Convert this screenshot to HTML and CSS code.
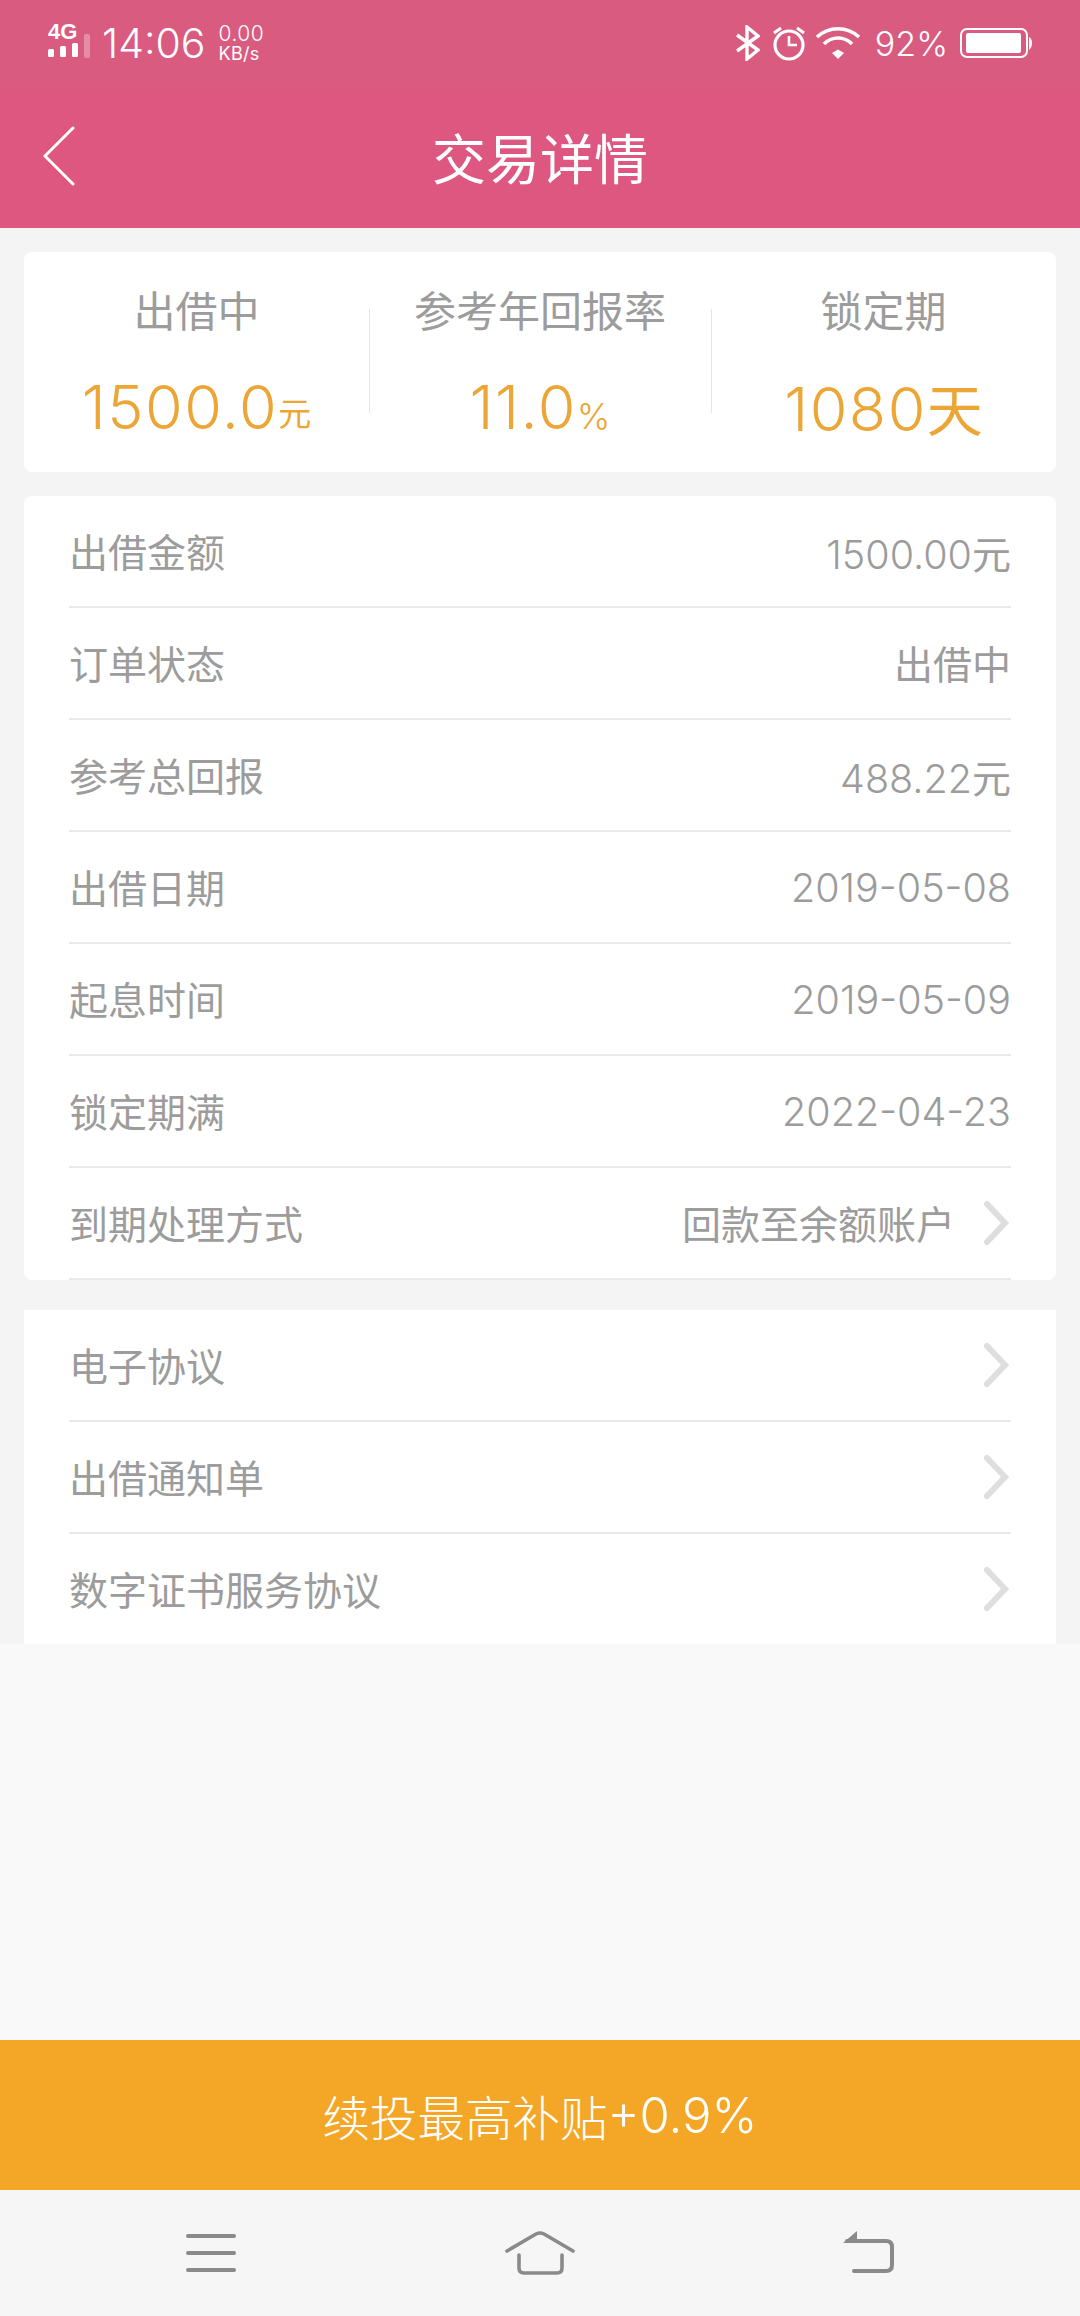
FILE: index.html
```html
<!DOCTYPE html>
<html lang="zh-CN">
<head>
    <meta charset="UTF-8">
    <title>交易详情</title>
    <link rel="stylesheet" href="styles.css">
</head>
<body>
<div class="page">
    <div class="topBar">
        <div class="statusBar">
            <div class="statusLeft">
                <div class="netType">
                    <div class="netColumn">
                        <span class="netLabel">4G</span>
                        <svg class="netBars" width="30" height="15" viewBox="0 0 30 15" fill="#fff">
                            <rect x="0" y="6" width="6" height="8" rx="1.5"/>
                            <rect x="12" y="3" width="6" height="11" rx="1.5"/>
                            <rect x="24" y="0" width="6" height="14" rx="1.5"/>
                        </svg>
                    </div>
                    <div class="netEmptyBar"></div>
                </div>
                <span class="clock">14:06</span>
                <span class="netSpeed"><span>0.00</span><span class="netUnit">KB/s</span></span>
            </div>
            <div class="statusRight">
                <svg width="24" height="36" viewBox="0 0 24 36" fill="none" stroke="#fff" stroke-width="3.4">
                    <path d="M1 10 L22 25 L11 34 V2 L22 11 L1 26"/>
                </svg>
                <svg width="34" height="36" viewBox="0 0 34 36" fill="none" stroke="#fff">
                    <circle cx="17" cy="20" r="14" stroke-width="3.2"/>
                    <path d="M17 11 V20 H25" stroke-width="2.6"/>
                    <path d="M2 8 L9 3 M32 8 L25 3" stroke-width="3"/>
                </svg>
                <svg class="wifi" width="46" height="34" viewBox="0 0 46 34" fill="none" stroke="#fff" stroke-width="3.6">
                    <path d="M2 11 C14 0 32 0 44 11"/>
                    <path d="M9 18 C17 10 29 10 37 18"/>
                    <path d="M17 27 L23 23.5 L29 27 L23 33 Z" fill="#fff" stroke="none"/>
                </svg>
                <span class="battPct">92%</span>
                <svg width="72" height="30" viewBox="0 0 72 30">
                    <rect x="1" y="1" width="66" height="28" rx="6" fill="none" stroke="#fff" stroke-width="2"/>
                    <rect x="6" y="5" width="55" height="20" rx="2" fill="#fff"/>
                    <path d="M69 9 C71 10 72 12 72 15 C72 18 71 20 69 22 Z" fill="#fff"/>
                </svg>
            </div>
        </div>
        <div class="navBar">
            <svg class="backIcon" width="32" height="60" viewBox="0 0 32 60" fill="none" stroke="#fff" stroke-width="3" stroke-linecap="round" stroke-linejoin="round">
                <path d="M30 2 L2 30 L30 58"/>
            </svg>
            <h1>交易详情</h1>
        </div>
    </div>

    <div class="content">
        <div class="card summary">
            <div class="summaryCol">
                <div class="summaryLabel">出借中</div>
                <div class="summaryValue">1500.0<small>元</small></div>
            </div>
            <div class="summaryCol">
                <div class="summaryLabel">参考年回报率</div>
                <div class="summaryValue">11.0<small class="pct">%</small></div>
            </div>
            <div class="summaryCol">
                <div class="summaryLabel">锁定期</div>
                <div class="summaryValue">1080<span class="bigUnit">天</span></div>
            </div>
        </div>

        <div class="card rows">
            <div class="row"><span class="rowLabel">出借金额</span><span class="rowValue">1500.00<span class="rowUnit">元</span></span></div>
            <div class="row"><span class="rowLabel">订单状态</span><span class="rowLabel">出借中</span></div>
            <div class="row"><span class="rowLabel">参考总回报</span><span class="rowValue">488.22<span class="rowUnit">元</span></span></div>
            <div class="row"><span class="rowLabel">出借日期</span><span class="rowValue">2019-05-08</span></div>
            <div class="row"><span class="rowLabel">起息时间</span><span class="rowValue">2019-05-09</span></div>
            <div class="row"><span class="rowLabel">锁定期满</span><span class="rowValue">2022-04-23</span></div>
            <div class="row">
                <span class="rowLabel">到期处理方式</span>
                <span class="rowAction">
                    <span class="rowLabel">回款至余额账户</span>
                    <svg class="chevron" width="28" height="46" viewBox="0 0 28 46" fill="none" stroke="#dedede" stroke-width="6" stroke-linecap="round"><path d="M4 4 L22 23 L4 42"/></svg>
                </span>
            </div>
        </div>

        <div class="card rows links">
            <div class="row"><span class="rowLabel">电子协议</span><svg width="28" height="46" viewBox="0 0 28 46" fill="none" stroke="#dedede" stroke-width="6" stroke-linecap="round"><path d="M4 4 L22 23 L4 42"/></svg></div>
            <div class="row"><span class="rowLabel">出借通知单</span><svg width="28" height="46" viewBox="0 0 28 46" fill="none" stroke="#dedede" stroke-width="6" stroke-linecap="round"><path d="M4 4 L22 23 L4 42"/></svg></div>
            <div class="row"><span class="rowLabel">数字证书服务协议</span><svg width="28" height="46" viewBox="0 0 28 46" fill="none" stroke="#dedede" stroke-width="6" stroke-linecap="round"><path d="M4 4 L22 23 L4 42"/></svg></div>
        </div>
    </div>

    <div class="actionButton">续投最高补贴<span class="actionRate">+0.9%</span></div>

    <div class="systemNav">
        <svg width="50" height="40" viewBox="0 0 50 40" fill="none" stroke="#8a8a8a" stroke-width="4" stroke-linecap="round">
            <path d="M2 3 H48 M2 20 H48 M2 37 H48"/>
        </svg>
        <svg width="70" height="44" viewBox="0 0 70 44" fill="none" stroke="#8a8a8a" stroke-width="3.6" stroke-linecap="round" stroke-linejoin="round">
            <path d="M2 20 L31 3 Q35 1 39 3 L68 20"/>
            <path d="M14 24 V37 Q14 42 19 42 H52 Q57 42 57 37 V24"/>
        </svg>
        <svg width="52" height="44" viewBox="0 0 52 44" fill="none" stroke="#8a8a8a" stroke-width="4" stroke-linecap="round">
            <path d="M4 10 H43 Q49 10 49 16 V34 Q49 40 43 40 H11"/>
            <path d="M0 12 L14 0 V12 Z" fill="#8a8a8a" stroke="none"/>
        </svg>
    </div>
</div>
</body>
</html>
```

FILE: styles.css
```css
* {
    box-sizing: border-box;
}
body {
    margin: 0;
    font-family: "Noto Sans CJK SC", "Noto Sans", sans-serif;
    background-color: #f9f9f9;
}
svg {
    display: block;
    flex: none;
}
.page {
    width: 1080px;
    height: 2316px;
    display: flex;
    flex-direction: column;
}
.topBar {
    height: 228px;
    background: linear-gradient(#d95c80 0, #d95c80 70px, #dd5780 100px);
    color: #fff;
}
.statusBar {
    height: 86px;
    padding: 0 48px;
    display: flex;
    justify-content: space-between;
    align-items: center;
}
.statusLeft,
.statusRight {
    display: flex;
    align-items: center;
}
.netType {
    display: flex;
    align-items: flex-end;
    gap: 6px;
    margin-bottom: 5px;
}
.netColumn {
    display: flex;
    flex-direction: column;
}
.netLabel {
    font-family: "Liberation Sans", sans-serif;
    font-size: 22px;
    font-weight: bold;
    line-height: 16px;
}
.netBars {
    margin-top: 3px;
}
.netEmptyBar {
    width: 6px;
    height: 24px;
    border-radius: 2px;
    background: rgba(255, 255, 255, 0.3);
}
.clock {
    margin-left: 12px;
    font-family: Inter, sans-serif;
    font-weight: 350;
    font-size: 41px;
}
.netSpeed {
    margin-left: 13px;
    display: flex;
    flex-direction: column;
    font-family: Inter, sans-serif;
    font-size: 21px;
    letter-spacing: 0.5px;
    line-height: 21px;
    font-weight: 300;
}
.netUnit {
    font-size: 18px;
    letter-spacing: 0.3px;
    line-height: 20px;
    font-weight: 400;
}
.statusRight {
    gap: 12px;
}
.wifi {
    margin-left: -3px;
}
.battPct {
    margin-left: 2px;
    font-family: Inter, sans-serif;
    font-weight: 300;
    font-size: 34px;
}
.navBar {
    position: relative;
    height: 142px;
    display: flex;
    align-items: center;
    justify-content: center;
}
.navBar h1 {
    margin: 0;
    font-size: 54px;
    font-weight: 400;
    line-height: 72px;
}
.backIcon {
    position: absolute;
    left: 43px;
    top: 40px;
}
.content {
    padding: 24px 24px 0;
    background: #f4f4f4;
}
.card {
    background: #fff;
    border-radius: 8px;
}
.summary {
    height: 220px;
    display: grid;
    grid-template-columns: 345px 342px 345px;
    margin-bottom: 24px;
}
.summaryCol {
    display: flex;
    flex-direction: column;
    align-items: center;
    position: relative;
}
.summaryCol + .summaryCol::before {
    content: "";
    position: absolute;
    left: 0;
    top: 57px;
    height: 104px;
    border-left: 1px solid #e4e4e4;
}
.summaryLabel {
    margin-top: 26px;
    font-size: 42px;
    line-height: 62px;
    color: #9c9c9c;
}
.summaryValue {
    margin-top: 27px;
    font-family: Inter, sans-serif;
    font-weight: 350;
    font-size: 61px;
    letter-spacing: 1.5px;
    line-height: 80px;
    color: #eba636;
}
.summaryValue small {
    font-family: "Noto Sans CJK SC", sans-serif;
    font-weight: 400;
    font-size: 33px;
    letter-spacing: 0;
    vertical-align: 3px;
}
.summaryValue .pct {
    font-family: Inter, sans-serif;
    font-weight: 300;
    font-size: 36px;
    vertical-align: 0;
}
.bigUnit {
    font-family: "Noto Sans CJK SC", sans-serif;
    font-weight: 400;
    font-size: 56px;
    letter-spacing: 0;
}
.rows {
    padding: 0 45px;
    font-size: 39px;
    color: #9c9c9c;
}
.links {
    margin-top: 30px;
    height: 334px;
    overflow: hidden;
    border-radius: 0;
}
.row {
    height: 112px;
    border-bottom: 2px solid #e9e9e9;
    display: flex;
    justify-content: space-between;
    align-items: center;
}
.rowLabel {
    margin-bottom: 3px;
}
.rowValue {
    margin-top: 2px;
    font-family: Inter, "Noto Sans CJK SC", sans-serif;
    font-weight: 350;
    font-size: 39.5px;
}
.rowUnit {
    font-family: "Noto Sans CJK SC", sans-serif;
    font-weight: 400;
    font-size: 39px;
}
.rowAction {
    display: flex;
    align-items: center;
}
.chevron {
    margin-left: 28px;
}
.actionButton {
    margin-top: auto;
    height: 150px;
    background: #f4a726;
    color: #fff;
    font-size: 47.5px;
    font-weight: 300;
    display: flex;
    align-items: center;
    justify-content: center;
}
.actionRate {
    font-family: Inter, sans-serif;
    font-size: 49px;
    font-weight: 300;
}
.systemNav {
    height: 126px;
    background: #f6f6f6;
    display: flex;
    align-items: center;
    justify-content: space-between;
    padding: 0 185px 0 186px;
}
```
